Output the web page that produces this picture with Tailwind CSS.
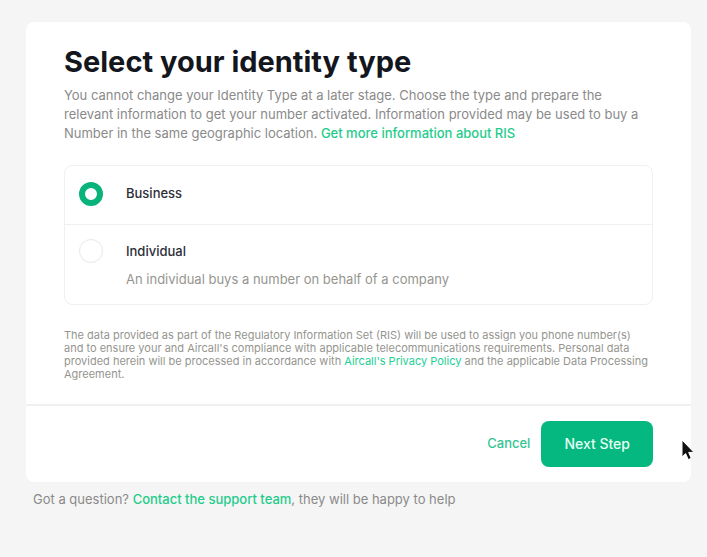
<!DOCTYPE html>
<html lang="en">

<head>
  <meta charset="UTF-8" />
  <meta name="viewport" content="width=device-width, initial-scale=1.0" />
  <title>Select your identity type</title>
  <script src="https://cdn.jsdelivr.net/npm/@tailwindcss/browser@4"></script>
</head>

<body class="min-h-screen bg-[#f5f5f5] pt-[22px] pr-4 pl-[26px] font-['Inter',sans-serif] text-[13px] text-[#8a8a8a]">

  <form class="rounded-lg bg-white">
    <div class="px-[38px] pt-6 pb-[23px]">
      <h1 class="text-[29px] leading-8 font-bold text-[#14161d]">Select your identity type</h1>
      <p class="mt-2 leading-[19px]">
        You cannot change your Identity Type at a later stage. Choose the type and prepare the
        relevant information to get your number activated. Information provided may be used to buy a
        Number in the same geographic location.
        <a href="#" class="font-medium text-[#1fcc8c]">Get more information about RIS</a>
      </p>

      <!-- Identity types -->
      <div class="mt-[22px] rounded-lg border border-[#f0f0f0]">
        <div class="flex items-center gap-[23px] border-b border-[#f0f0f0] px-[14px] pt-4 pb-[18px]">
          <input type="radio" id="business" name="identity" checked
            class="size-6 shrink-0 appearance-none rounded-full border border-[#e8e8e8] bg-white checked:border-6 checked:border-[#0ab37c]" />
          <label for="business" class="font-medium text-[#2c2e38]">Business</label>
        </div>
        <div class="flex items-start gap-[23px] px-[14px] pt-[14px] pb-[13px]">
          <input type="radio" id="individual" name="identity" aria-describedby="individual-hint"
            class="size-6 shrink-0 appearance-none rounded-full border border-[#e8e8e8] bg-white checked:border-6 checked:border-[#0ab37c]" />
          <div class="leading-6">
            <label for="individual" class="font-medium text-[#2c2e38]">Individual</label>
            <p id="individual-hint" class="mt-1 text-[#95958f]">An individual buys a number on behalf of a company</p>
          </div>
        </div>
      </div>

      <p class="mt-6 text-[11px] leading-[13px] text-[#95958f]">
        The data provided as part of the Regulatory Information Set (RIS) will be used to assign you phone number(s)
        and to ensure your and Aircall's compliance with applicable telecommunications requirements. Personal data
        provided herein will be processed in accordance with
        <a href="#" class="text-[#22cf94]">Aircall's Privacy Policy</a>
        and the applicable Data Processing Agreement.
      </p>
    </div>

    <div class="flex items-center justify-end gap-[11px] border-t-2 border-[#f0f0f0] px-[38px] py-[15px]">
      <button type="button" class="font-medium text-[#35c493]">Cancel</button>
      <button type="submit" class="h-[46px] rounded-lg bg-[#04b87f] px-[23px] text-sm font-medium text-[#e4fff4]">Next Step</button>
    </div>
  </form>

  <p class="mt-2 px-[7px] leading-[19px]">
    Got a question? <a href="#" class="font-medium text-[#1fcc8c]">Contact the support team</a>, they will be happy to help
  </p>

  <!-- Mouse pointer -->
  <svg class="pointer-events-none absolute top-[438px] left-[680px] h-[24px] w-[16px]" viewBox="0 0 16 24" aria-hidden="true">
    <path d="M2 2v17l3.600-3.400 2.700 6 3-1.300-2.600-5.900H14z" fill="#111" stroke="#fff" stroke-width="1" />
  </svg>
</body>

</html>
